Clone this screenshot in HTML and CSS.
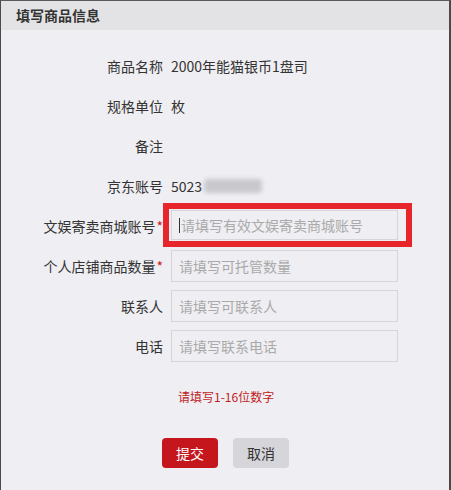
FILE: index.html
```html
<!DOCTYPE html>
<html>
<head>
    <meta charset="UTF-8">
    <meta name="viewport" content="width=device-width, initial-scale=1.0">
    <title>填写商品信息</title>
    <link rel="stylesheet" href="styles.css">
</head>
<body>
    <div class="dialog">
        <div class="dialog-head">填写商品信息</div>

        <div class="dialog-body">
            <div class="row">
                <div class="label">商品名称</div>
                <div class="value">2000年能猫银币1盘司</div>
            </div>
            <div class="row">
                <div class="label">规格单位</div>
                <div class="value">枚</div>
            </div>
            <div class="row">
                <div class="label">备注</div>
                <div class="value"></div>
            </div>
            <div class="row">
                <div class="label">京东账号</div>
                <div class="value">5023<span class="masked"></span></div>
            </div>

            <!-- highlighted field -->
            <div class="row">
                <div class="label">文娱寄卖商城账号<span class="req">*</span></div>
                <div class="field marked">
                    <div class="input"><span class="caret"></span>请填写有效文娱寄卖商城账号</div>
                    <span class="mark-box"></span>
                </div>
            </div>
            <div class="row">
                <div class="label">个人店铺商品数量<span class="req">*</span></div>
                <div class="field">
                    <div class="input">请填写可托管数量</div>
                </div>
            </div>
            <div class="row">
                <div class="label">联系人</div>
                <div class="field">
                    <div class="input">请填写可联系人</div>
                </div>
            </div>
            <div class="row">
                <div class="label">电话</div>
                <div class="field">
                    <div class="input">请填写联系电话</div>
                </div>
            </div>

            <div class="error-line">请填写1-16位数字</div>

            <div class="actions">
                <button class="btn btn-submit">提交</button>
                <button class="btn btn-cancel">取消</button>
            </div>
        </div>
    </div>
</body>
</html>
```

FILE: styles.css
```css
* {
    box-sizing: border-box;
}

body {
    margin: 0;
    font-family: "Noto Sans CJK SC", "Liberation Sans", sans-serif;
    font-size: 14px;
    color: #333;
    background-color: #efeef2;
}

.dialog {
    min-height: 100vh;
    border-top: 1px solid #5a5a5a;
    border-left: 1px solid #4a4a4a;
    border-right: 2px solid #4a4a4a;
    background-color: #efeef2;
}

.dialog-head {
    height: 29px;
    line-height: 29px;
    padding-left: 15px;
    font-size: 14px;
    font-weight: bold;
    color: #333;
    background-color: #e3e3e5;
}

.dialog-body {
    padding-top: 16px;
}

.row {
    display: grid;
    grid-template-columns: 162px 1fr;
    column-gap: 8px;
    height: 40px;
    align-items: center;
}

.label {
    text-align: right;
    white-space: nowrap;
}

.req {
    color: #d0191f;
    margin-left: 1px;
}

.value {
    display: flex;
    align-items: center;
}

.masked {
    display: inline-block;
    width: 58px;
    height: 14px;
    margin-left: 2px;
    border-radius: 4px;
    background-color: #c9c8cc;
    filter: blur(2px);
}

.field {
    position: relative;
    width: 227px;
}

.input {
    height: 32px;
    line-height: 30px;
    padding-left: 7px;
    border: 1px solid #d6d5d9;
    background-color: #efeef2;
    color: #aaa;
    white-space: nowrap;
    display: flex;
    align-items: center;
}

.marked .input {
    margin-top: -2px;
    height: 30px;
}

.caret {
    display: inline-block;
    width: 1px;
    height: 15px;
    background-color: #333;
    margin-right: 1px;
}

.mark-box {
    position: absolute;
    left: -8px;
    top: -9px;
    width: 249px;
    height: 44px;
    border: 6px solid #e6262b;
}

.error-line {
    margin-top: 22px;
    padding-left: 177px;
    line-height: 18px;
    font-size: 12px;
    color: #c01c22;
}

.actions {
    display: flex;
    gap: 15px;
    margin-top: 32px;
    padding-left: 161px;
}

.btn {
    width: 56px;
    height: 30px;
    border: none;
    border-radius: 4px;
    font-family: "Noto Sans CJK SC", "Liberation Sans", sans-serif;
    font-size: 14px;
    cursor: pointer;
}

.btn-submit {
    background-color: #c5161d;
    color: #fff;
}

.btn-cancel {
    background-color: #d6d5d9;
    color: #333;
}
```
